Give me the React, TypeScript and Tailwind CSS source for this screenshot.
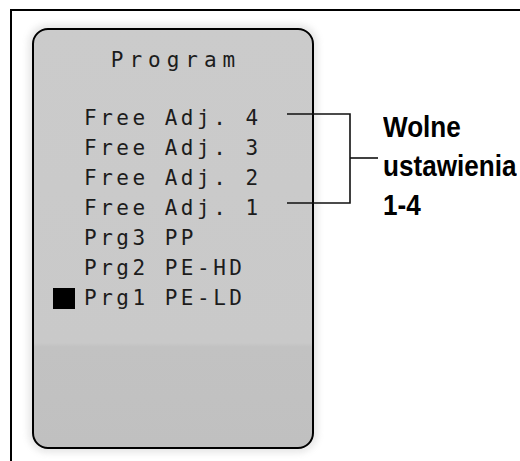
const ROWS = ['Free Adj. 4', 'Free Adj. 3', 'Free Adj. 2', 'Free Adj. 1', 'Prg3 PP', 'Prg2 PE-HD', 'Prg1 PE-LD']

export default function App() {
  return (
    <div className="relative w-[520px] h-[461px] overflow-hidden bg-white pl-[10px] pt-[9px]">
      <div className="flex h-[470px] w-[530px] border-l-2 border-t-2 border-black">
        {/* display panel */}
        <div className="ml-[20px] mt-[17px] flex h-[421px] w-[282px] shrink-0 flex-col rounded-[16px] border-2 border-black bg-[linear-gradient(to_bottom,#cbcbcb_0%,#c9c9c9_75%,#c2c2c2_76%,#c0c0c0_100%)] font-['DejaVu_Sans_Mono',monospace] text-[21px] leading-[30px] text-[#1c1c1c] shadow-[0_0_6px_4px_rgba(230,230,230,0.9)]">
          <div className="pt-[15px] pl-[6px] text-center tracking-[6px]">Program</div>
          <div className="mt-[28px] flex flex-col pl-[19px]">
            {ROWS.map((r, i) => (
              <div key={r} className="flex items-center gap-[9px]">
                <span className={i === ROWS.length - 1 ? 'h-[21px] w-[22px] bg-black' : 'h-[21px] w-[22px]'} />
                <span className="whitespace-pre tracking-[3.5px]">{r}</span>
              </div>
            ))}
          </div>
        </div>

        {/* annotation */}
        <div className="ml-[69px] mt-[96px] origin-left scale-x-[0.87] font-['Liberation_Sans',sans-serif] text-[30px] font-bold leading-[39px] text-black">
          <div>Wolne</div>
          <div>ustawienia</div>
          <div>1-4</div>
        </div>
      </div>

      <svg className="absolute left-0 top-0" width="520" height="461">
        <g stroke="#111" strokeWidth="1.6" fill="none">
          <path d="M287 114 H350 V203 H287" />
          <path d="M350 158 H378" />
        </g>
      </svg>
    </div>
  )
}
